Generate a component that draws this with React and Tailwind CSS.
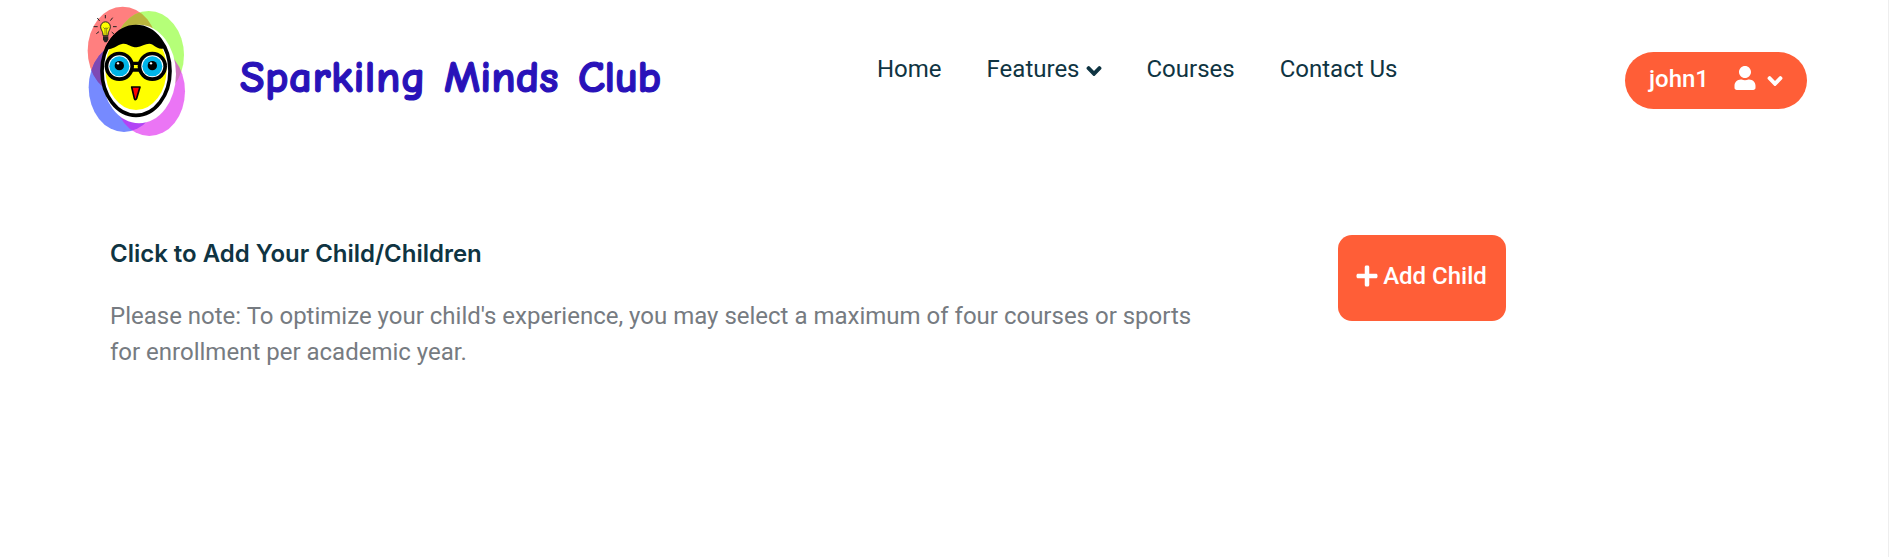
import { FaChevronDown, FaPlus, FaUser } from 'react-icons/fa'

function Logo() {
  return (
    <svg className="h-[140px] w-[125px] shrink-0" viewBox="0 0 375 420" aria-hidden="true">
      <clipPath id="coral"><ellipse cx="143" cy="152" rx="105" ry="132" /></clipPath>
      <ellipse cx="143" cy="152" rx="105" ry="132" fill="#ff7f7f" />
      <ellipse cx="221" cy="165" rx="106" ry="132" fill="#99ff44" fillOpacity=".72" />
      <ellipse cx="221" cy="165" rx="106" ry="132" fill="#bab53e" clipPath="url(#coral)" />
      <ellipse cx="147" cy="262" rx="106" ry="134" fill="#1a3cff" fillOpacity=".6" />
      <ellipse cx="147" cy="262" rx="106" ry="134" fill="#7e49b5" clipPath="url(#coral)" />
      <ellipse cx="223" cy="274" rx="107" ry="134" fill="#dd11ee" fillOpacity=".58" />
      <ellipse cx="192" cy="222" rx="111" ry="148" fill="#fff" />
      <ellipse cx="183" cy="213" rx="102" ry="133" fill="#fff" stroke="#000" strokeWidth="11" />
      <ellipse cx="183" cy="208" rx="92" ry="122" fill="#ff0" />
      <path d="M90 148C106 98 150 78 183 78s72 22 88 62c-10 14-26 2-38-6-16-8-30 6-48 8-20 0-28-14-44-10s-28 18-51 16Z" fill="#000" />
      <path d="M93 190l18 6M274 190l-18 6M165 190h37M165 210h37" stroke="#000" strokeWidth="10" fill="none" />
      <circle cx="133" cy="199" r="44" fill="#000" /><circle cx="133" cy="199" r="33" fill="#fff" /><circle cx="133" cy="199" r="30" fill="#00b4e8" />
      <circle cx="232" cy="199" r="44" fill="#000" /><circle cx="232" cy="199" r="33" fill="#fff" /><circle cx="232" cy="199" r="30" fill="#00b4e8" />
      <circle cx="133" cy="197" r="14" fill="#000" /><circle cx="232" cy="197" r="14" fill="#000" />
      <circle cx="129" cy="190" r="3.5" fill="#fff" /><circle cx="228" cy="190" r="3.5" fill="#fff" />
      <path d="M170 261h25l-10 34q-4 8-7 0Z" fill="#f00" stroke="#000" strokeWidth="5" strokeLinejoin="round" />
      <path d="M84 107c0-15-7-16-7-27a14 14 0 0 1 29 0c0 11-7 12-7 27Z" fill="#ff0" stroke="#222" strokeWidth="3" />
      <path d="M85 82l5 5 3-4 3 4 4-5M90 87v18M95 87v18" stroke="#222" strokeWidth="1.5" fill="none" />
      <path d="M84 109h16v10l-5 8h-6l-5-8Z" fill="#222" />
      <path d="M68 80h-12M74 63l-7-9M91 55V45M106 62l7-9M114 80h11M110 96l8 7M72 95l-8 6" stroke="#222" strokeWidth="3" />
    </svg>
  )
}

function Brand() {
  return (
    <div className="flex whitespace-nowrap font-['Comic_Sans_MS','Comic_Neue',Lato,sans-serif] text-[45px] leading-[60px] font-bold text-[#2912b9] [-webkit-text-stroke:1.2px_#2912b9]">
      <span className="w-[204px] tracking-[0.5px]">Sparkilng</span><span className="w-[134px]">Minds</span><span className="tracking-[-0.5px]">Club</span>
    </div>
  )
}

export default function App() {
  return (
    <div className="flex h-[557px] flex-col border-r border-[#eee] bg-white font-[Roboto,sans-serif] text-2xl leading-9 text-[#0f3442]">
      <header className="flex h-[140px] items-start pl-[75px]">
        <Logo />
        <div className="ml-10 mt-[47px] w-[637px]"><Brand /></div>
        <nav className="mt-[51px] flex w-[748px] gap-[45px] whitespace-nowrap">
          <a>Home</a>
          <a className="flex items-center gap-1.5">Features<FaChevronDown className="mt-1 size-4 stroke-current stroke-[45]" /></a>
          <a>Courses</a>
          <a>Contact Us</a>
        </nav>
        <button className="mt-[52px] flex h-[57px] w-[182px] items-center rounded-full bg-[#ff5e37] pb-1 pl-6 font-medium text-white">
          <span>john1</span><FaUser className="-mt-0.5 ml-6 size-6" /><FaChevronDown className="mt-1 ml-2.5 size-4 stroke-current stroke-[45]" />
        </button>
      </header>
      <main className="flex items-start pt-[95px] pl-[110px]">
        <section className="w-[1228px]">
          <h1 className="mt-px mb-[26px] font-[Inter,sans-serif] leading-9 font-semibold tracking-[-0.02px]"><span>Click to Add Your Child/Children</span></h1>
          <p className="whitespace-nowrap text-[#767b81]"><span>Please note: To optimize your child's experience, you may select a maximum of four courses or sports</span><br /><span>for enrollment per academic year.</span></p>
        </section>
        <button className="flex h-[86px] w-[168px] items-center justify-center gap-1 whitespace-nowrap rounded-[14px] bg-[#ff5e37] pr-0.5 pb-[5px] font-medium text-white"><FaPlus className="size-6" />Add Child</button>
      </main>
    </div>
  )
}
